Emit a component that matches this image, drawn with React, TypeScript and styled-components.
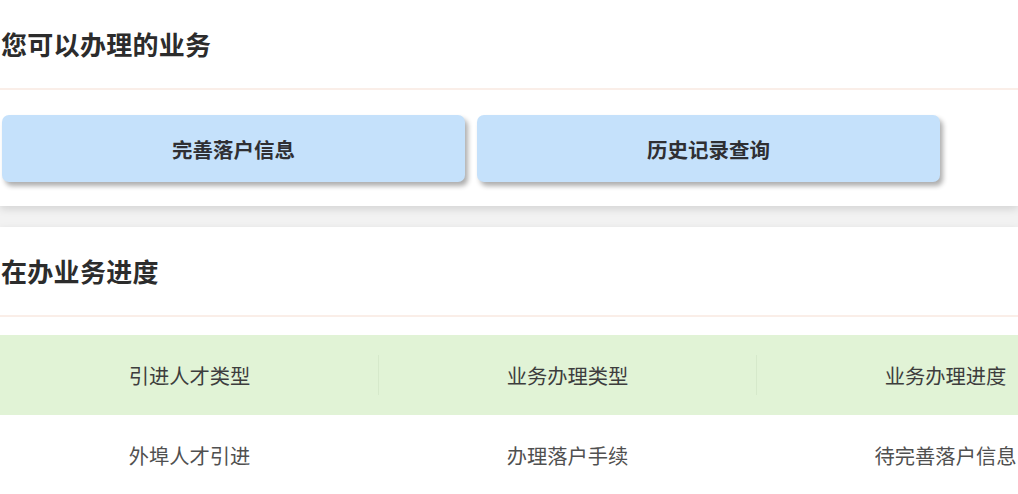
import React from "react";
import styled, {createGlobalStyle} from "styled-components";

const GlobalStyle = createGlobalStyle`
  html, body {
    margin: 0;
    padding: 0;
    background: #f2f2f2;
    font-family: "Noto Sans CJK SC", "Noto Sans", sans-serif;
  }
  #root {
    width: 1018px;
    height: 494px;
    overflow: hidden;
  }
`;

const Page = styled.div`
  display: flex;
  flex-direction: column;
  gap: 21px;
`;

const Section = styled.section`
  background: #fff;
  box-shadow: 0 3px 8px rgba(0, 0, 0, 0.13);
`;

const SectionTitle = styled.h2`
  margin: 0;
  height: 90px;
  display: flex;
  align-items: center;
  padding-left: 1px;
  padding-bottom: 2px;
  font-size: 26px;
  font-weight: 700;
  color: #2c2c2c;
  border-bottom: 2px solid #faeee8;
  box-sizing: border-box;
  letter-spacing: 0.3px;
`;

const ButtonRow = styled.div`
  display: flex;
  gap: 12px;
  padding: 25px 0 24px 2px;
`;

const ActionButton = styled.button`
  width: 463px;
  height: 67px;
  border: none;
  border-radius: 7px;
  background: #c5e1fb;
  box-shadow: 3px 4px 5px rgba(0, 0, 0, 0.32);
  font-family: inherit;
  font-size: 20.5px;
  font-weight: 700;
  color: #2f2f33;
  cursor: pointer;
`;

const Table = styled.div`
  margin-top: 18px;
  width: 1134px;
  padding-bottom: 40px;
`;

const Row = styled.div<{ $head?: boolean }>`
  display: grid;
  grid-template-columns: repeat(3, 378px);
  height: 80px;
  align-items: center;
  background: ${p => (p.$head ? "#e1f3d6" : "#fff")};
`;

const Cell = styled.div<{ $head?: boolean; $divider?: boolean }>`
  text-align: center;
  font-size: 20.3px;
  color: ${p => (p.$head ? "#3d3d3d" : "#505050")};
  line-height: 40px;
  border-left: ${p => (p.$divider ? "1px solid #d6e9cb" : "1px solid transparent")};
`;

const services = ["完善落户信息", "历史记录查询"];
const columns = ["引进人才类型", "业务办理类型", "业务办理进度"];
const records = [["外埠人才引进", "办理落户手续", "待完善落户信息"]];

export default function App() {
    return (
        <>
            <GlobalStyle/>
            <Page>
                <Section>
                    <SectionTitle>您可以办理的业务</SectionTitle>
                    <ButtonRow>
                        {services.map(s => (
                            <ActionButton key={s}>{s}</ActionButton>
                        ))}
                    </ButtonRow>
                </Section>
                <Section>
                    <SectionTitle>在办业务进度</SectionTitle>
                    <Table>
                        <Row $head>
                            {columns.map((c, i) => (
                                <Cell key={c} $head $divider={i > 0}>{c}</Cell>
                            ))}
                        </Row>
                        {records.map((r, idx) => (
                            <Row key={idx}>
                                {r.map(v => (
                                    <Cell key={v}>{v}</Cell>
                                ))}
                            </Row>
                        ))}
                    </Table>
                </Section>
            </Page>
        </>
    );
}
